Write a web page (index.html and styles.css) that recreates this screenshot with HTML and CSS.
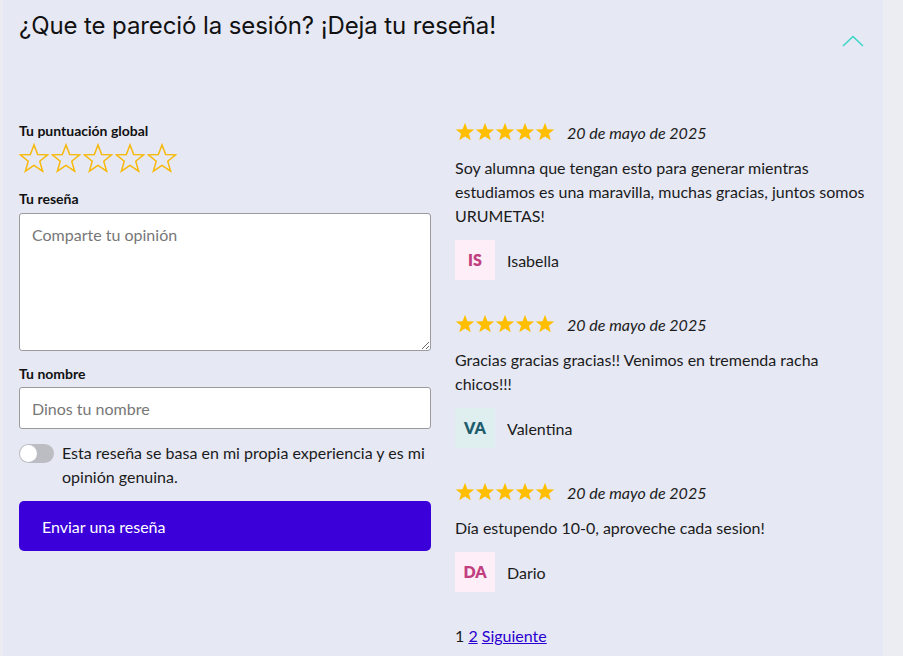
FILE: index.html
```html
<!DOCTYPE html>
<html lang="es">
<head>
<meta charset="utf-8">
<link rel="stylesheet" href="styles.css">
</head>
<body>
<div class="page">
  <section class="panel">
    <header class="panel-head">
      <h2 class="title">¿Que te pareció la sesión? ¡Deja tu reseña!</h2>
      <svg class="chevron" width="22" height="12" viewBox="0 0 22 12"><path d="M1 11 L11 1.5 L21 11" fill="none" stroke="#3dd6c8" stroke-width="1.6"/></svg>
    </header>
    <div class="cols">
      <form class="form">
        <label class="lbl">Tu puntuación global</label>
        <div class="rate">
          <svg class="ostar" viewBox="0 0 24 24"><polygon points="12,1.5 14.9,9.2 23,9.5 16.6,14.6 18.9,22.5 12,17.9 5.1,22.5 7.4,14.6 1,9.5 9.1,9.2"/></svg>
          <svg class="ostar" viewBox="0 0 24 24"><polygon points="12,1.5 14.9,9.2 23,9.5 16.6,14.6 18.9,22.5 12,17.9 5.1,22.5 7.4,14.6 1,9.5 9.1,9.2"/></svg>
          <svg class="ostar" viewBox="0 0 24 24"><polygon points="12,1.5 14.9,9.2 23,9.5 16.6,14.6 18.9,22.5 12,17.9 5.1,22.5 7.4,14.6 1,9.5 9.1,9.2"/></svg>
          <svg class="ostar" viewBox="0 0 24 24"><polygon points="12,1.5 14.9,9.2 23,9.5 16.6,14.6 18.9,22.5 12,17.9 5.1,22.5 7.4,14.6 1,9.5 9.1,9.2"/></svg>
          <svg class="ostar" viewBox="0 0 24 24"><polygon points="12,1.5 14.9,9.2 23,9.5 16.6,14.6 18.9,22.5 12,17.9 5.1,22.5 7.4,14.6 1,9.5 9.1,9.2"/></svg>
        </div>
        <label class="lbl lbl-review">Tu reseña</label>
        <textarea class="area" placeholder="Comparte tu opinión"></textarea>
        <label class="lbl lbl-name">Tu nombre</label>
        <input class="field" type="text" placeholder="Dinos tu nombre">
        <div class="consent">
          <span class="toggle"><span class="knob"></span></span>
          <span class="consent-text">Esta reseña se basa en mi propia experiencia y es mi opinión genuina.</span>
        </div>
        <button type="button" class="submit">Enviar una reseña</button>
      </form>
      <div class="reviews">
        <article class="review">
          <div class="meta">
            <span class="stars">
              <svg class="fstar" viewBox="0 0 24 24"><polygon points="12,1 14.9,8.6 23,8.9 16.7,14 18.9,22 12,17.4 5.1,22 7.3,14 1,8.9 9.1,8.6"/></svg><svg class="fstar" viewBox="0 0 24 24"><polygon points="12,1 14.9,8.6 23,8.9 16.7,14 18.9,22 12,17.4 5.1,22 7.3,14 1,8.9 9.1,8.6"/></svg><svg class="fstar" viewBox="0 0 24 24"><polygon points="12,1 14.9,8.6 23,8.9 16.7,14 18.9,22 12,17.4 5.1,22 7.3,14 1,8.9 9.1,8.6"/></svg><svg class="fstar" viewBox="0 0 24 24"><polygon points="12,1 14.9,8.6 23,8.9 16.7,14 18.9,22 12,17.4 5.1,22 7.3,14 1,8.9 9.1,8.6"/></svg><svg class="fstar" viewBox="0 0 24 24"><polygon points="12,1 14.9,8.6 23,8.9 16.7,14 18.9,22 12,17.4 5.1,22 7.3,14 1,8.9 9.1,8.6"/></svg>
            </span>
            <span class="date">20 de mayo de 2025</span>
          </div>
          <p class="text">Soy alumna que tengan esto para generar mientras estudiamos es una maravilla, muchas gracias, juntos somos URUMETAS!</p>
          <div class="author"><span class="avatar pink">IS</span><span class="name">Isabella</span></div>
        </article>
        <article class="review">
          <div class="meta">
            <span class="stars">
              <svg class="fstar" viewBox="0 0 24 24"><polygon points="12,1 14.9,8.6 23,8.9 16.7,14 18.9,22 12,17.4 5.1,22 7.3,14 1,8.9 9.1,8.6"/></svg><svg class="fstar" viewBox="0 0 24 24"><polygon points="12,1 14.9,8.6 23,8.9 16.7,14 18.9,22 12,17.4 5.1,22 7.3,14 1,8.9 9.1,8.6"/></svg><svg class="fstar" viewBox="0 0 24 24"><polygon points="12,1 14.9,8.6 23,8.9 16.7,14 18.9,22 12,17.4 5.1,22 7.3,14 1,8.9 9.1,8.6"/></svg><svg class="fstar" viewBox="0 0 24 24"><polygon points="12,1 14.9,8.6 23,8.9 16.7,14 18.9,22 12,17.4 5.1,22 7.3,14 1,8.9 9.1,8.6"/></svg><svg class="fstar" viewBox="0 0 24 24"><polygon points="12,1 14.9,8.6 23,8.9 16.7,14 18.9,22 12,17.4 5.1,22 7.3,14 1,8.9 9.1,8.6"/></svg>
            </span>
            <span class="date">20 de mayo de 2025</span>
          </div>
          <p class="text">Gracias gracias gracias!! Venimos en tremenda racha chicos!!!</p>
          <div class="author"><span class="avatar teal">VA</span><span class="name">Valentina</span></div>
        </article>
        <article class="review">
          <div class="meta">
            <span class="stars">
              <svg class="fstar" viewBox="0 0 24 24"><polygon points="12,1 14.9,8.6 23,8.9 16.7,14 18.9,22 12,17.4 5.1,22 7.3,14 1,8.9 9.1,8.6"/></svg><svg class="fstar" viewBox="0 0 24 24"><polygon points="12,1 14.9,8.6 23,8.9 16.7,14 18.9,22 12,17.4 5.1,22 7.3,14 1,8.9 9.1,8.6"/></svg><svg class="fstar" viewBox="0 0 24 24"><polygon points="12,1 14.9,8.6 23,8.9 16.7,14 18.9,22 12,17.4 5.1,22 7.3,14 1,8.9 9.1,8.6"/></svg><svg class="fstar" viewBox="0 0 24 24"><polygon points="12,1 14.9,8.6 23,8.9 16.7,14 18.9,22 12,17.4 5.1,22 7.3,14 1,8.9 9.1,8.6"/></svg><svg class="fstar" viewBox="0 0 24 24"><polygon points="12,1 14.9,8.6 23,8.9 16.7,14 18.9,22 12,17.4 5.1,22 7.3,14 1,8.9 9.1,8.6"/></svg>
            </span>
            <span class="date">20 de mayo de 2025</span>
          </div>
          <p class="text">Día estupendo 10-0, aproveche cada sesion!</p>
          <div class="author"><span class="avatar pink">DA</span><span class="name">Dario</span></div>
        </article>
        <nav class="pager">1 <a href="#">2</a> <a href="#">Siguiente</a></nav>
      </div>
    </div>
  </section>
</div>
</body>
</html>
```
FILE: styles.css
```css
html, body {
  margin: 0;
  padding: 0;
  background: #ececf3;
}
body {
  font-family: Lato, "Liberation Sans", sans-serif;
  color: #1b1b1b;
}
.page {
  padding-left: 3px;
  width: 880px;
}
.panel {
  background: #e6e8f4;
  padding: 0 18px 0 16px;
  height: 656px;
  box-sizing: border-box;
}
.panel-head {
  display: flex;
  justify-content: space-between;
  align-items: flex-start;
  height: 47px;
}
.title {
  margin: 11px 0 0;
  font-family: Inter, "Noto Sans", sans-serif;
  font-weight: 400;
  font-size: 24px;
  letter-spacing: -0.1px;
  line-height: 30px;
  color: #111;
}
.chevron {
  margin-top: 35px;
  margin-right: 1px;
}
.cols {
  display: flex;
  gap: 24px;
  margin-top: 73px;
}
.form {
  width: 412px;
  display: flex;
  flex-direction: column;
}
.lbl {
  font-size: 14px;
  font-weight: 700;
  line-height: 22px;
  color: #111;
}
.rate {
  display: flex;
  gap: 2px;
  margin: 1px 0 0;
}
.ostar {
  width: 30px;
  height: 30px;
}
.ostar polygon {
  fill: none;
  stroke: #f7b90d;
  stroke-width: 1.2;
  stroke-linejoin: miter;
}
.lbl-review {
  margin-top: 15px;
}
.area {
  margin-top: 3px;
  height: 138px;
  box-sizing: border-box;
  border: 1px solid #9a9a9e;
  border-radius: 3px;
  padding: 11px 12px;
  font-family: Lato, sans-serif;
  font-size: 16px;
  resize: vertical;
  background: #fff;
}
.area::placeholder, .field::placeholder {
  color: #777;
}
.lbl-name {
  margin-top: 12px;
}
.field {
  margin-top: 2px;
  height: 42px;
  box-sizing: border-box;
  border: 1px solid #9a9a9e;
  border-radius: 3px;
  padding: 0 12px;
  font-family: Lato, sans-serif;
  font-size: 16px;
  background: #fff;
}
.consent {
  display: flex;
  align-items: flex-start;
  gap: 8px;
  margin-top: 12px;
}
.toggle {
  flex: none;
  width: 35px;
  height: 19px;
  border-radius: 10px;
  background: #bcbdc3;
  margin-top: 3px;
  position: relative;
}
.knob {
  position: absolute;
  left: 1px;
  top: 1px;
  width: 17px;
  height: 17px;
  border-radius: 50%;
  background: #fff;
}
.consent-text {
  font-size: 16px;
  line-height: 24px;
}
.submit {
  margin-top: 12px;
  height: 50px;
  border: none;
  border-radius: 5px;
  background: #3b00d9;
  color: #fff;
  text-align: left;
  padding: 0 23px;
  font-family: Lato, sans-serif;
  font-size: 16px;
}
.reviews {
  flex: 1;
  display: flex;
  flex-direction: column;
}
.review {
  margin-bottom: 32px;
}
.meta {
  display: flex;
  align-items: center;
  gap: 12px;
  height: 24px;
}
.stars {
  display: flex;
}
.fstar {
  width: 20px;
  height: 20px;
  fill: #ffbe00;
  display: block;
}
.date {
  font-style: italic;
  font-size: 16px;
}
.text {
  margin: 12px 0 0;
  font-size: 16px;
  line-height: 24px;
}
.author {
  display: flex;
  align-items: center;
  gap: 12px;
  margin-top: 12px;
}
.avatar {
  width: 40px;
  height: 40px;
  display: flex;
  align-items: center;
  justify-content: center;
  font-family: Lato, sans-serif;
  font-weight: 800;
  font-size: 16px;
  padding-bottom: 2px;
  box-sizing: border-box;
}
.avatar.pink {
  background: #fdeef7;
  color: #c13f80;
}
.avatar.teal {
  background: #dfeff0;
  color: #1f5d6d;
}
.name {
  font-size: 16px;
}
.pager {
  font-size: 16px;
  line-height: 24px;
}
.pager a {
  color: #2a00d0;
}
```
